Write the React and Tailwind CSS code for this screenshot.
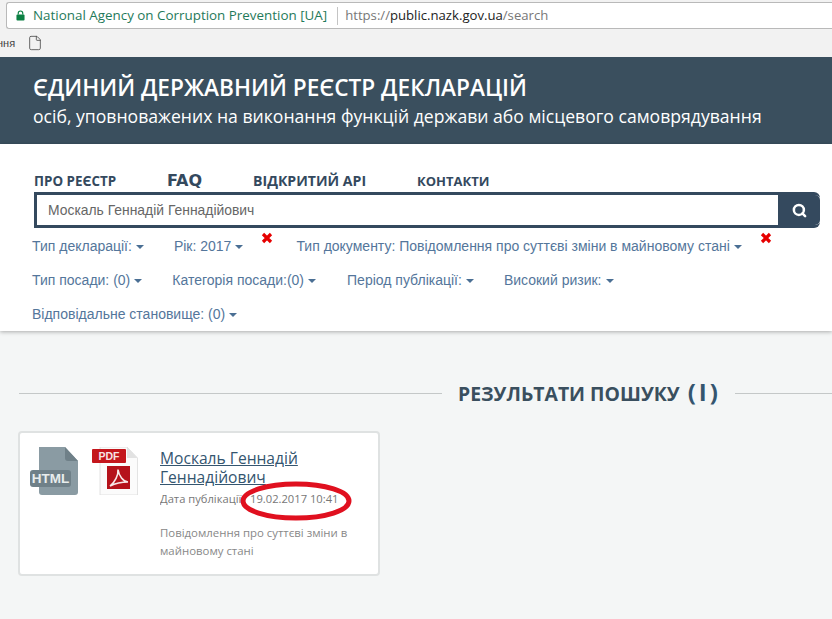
import React from 'react';
import { Search, File } from 'lucide-react';

const Caret = () => (
  <span className="ml-[4px] inline-block h-0 w-0 border-x-4 border-t-4 border-x-transparent border-t-[#4a6f94] align-middle" />
);

const Filter = ({ children, className = '' }) => (
  <span className={`whitespace-nowrap text-[14px] leading-5 text-[#54769b] ${className}`}>
    {children}
    <Caret />
  </span>
);

const RemoveMark = ({ className = '' }) => (
  <svg viewBox="0 0 12 12" className={`h-3 w-3 ${className}`}>
    <path d="M2 2 L10 10 M10 2 L2 10" stroke="#e60000" strokeWidth="3.200" />
  </svg>
);

const HtmlIcon = () => (
  <svg viewBox="0 0 50 50" className="h-[50px] w-[50px]">
    <path d="M9 0 H35 L48 14 V45 a3 3 0 0 1 -3 3 H12 a3 3 0 0 1 -3 -3 Z" fill="#8a9ba3" />
    <path d="M35 0 L48 14 H38 a3 3 0 0 1 -3 -3 Z" fill="#6f8088" />
    <rect x="0" y="23" width="41" height="17" rx="3" fill="#6f8088" />
    <text x="20.500" y="36" textAnchor="middle" fontSize="13.500" fontWeight="700" fill="#e8eded" fontFamily="Liberation Sans">HTML</text>
  </svg>
);

const PdfIcon = () => (
  <svg viewBox="0 0 46 48" className="h-12 w-[46px]">
    <path d="M8 0 H35 L45.500 11 V48 H8 Z" fill="#fbfbfb" stroke="#dcdcdc" strokeWidth="0.800" />
    <path d="M35 0 L45.500 11 H35 Z" fill="#e2e2e2" />
    <rect x="0" y="2" width="34" height="14" rx="1" fill="#c4161c" />
    <text x="17" y="13" textAnchor="middle" fontSize="10.500" fontWeight="700" fill="#f6e3e3" fontFamily="Liberation Sans">PDF</text>
    <rect x="15" y="19" width="23" height="23" fill="#b5121b" />
    <path d="M18 39 C23 35 26.500 28 26 22.500 C27 29 31 34.500 36 35 C30 35 24 36 18 39 Z" fill="none" stroke="#f8e8e8" strokeWidth="1.600" />
  </svg>
);

export default function App() {
  return (
    <div className="flex h-[619px] w-[832px] flex-col overflow-hidden bg-[#f4f6f6] font-['Liberation_Sans',sans-serif]">
      <div className="flex h-[57px] flex-col bg-[#f2f2f2]">
        <div className="ml-[6px] mt-[2px] flex h-[27px] items-center rounded-l-[3px] border border-r-0 border-[#b9b9b9] bg-white pl-[9px]">
          <svg viewBox="0 0 10 12" className="h-[11px] w-[9px]">
            <path d="M2.500 5 V3.500 a2.500 2.500 0 0 1 5 0 V5" fill="none" stroke="#0b8043" strokeWidth="1.300" />
            <rect x="0.500" y="5" width="9" height="6.500" rx="1" fill="#0b8043" />
          </svg>
          <span className="ml-[8px] whitespace-nowrap font-['Open_Sans',sans-serif] text-[13.400px] text-[#1f7a5a]">National Agency on Corruption Prevention [UA]</span>
          <span className="ml-[10px] h-[18px] w-px bg-[#c4c4c4]" />
          <span className="ml-[7px] whitespace-nowrap font-['Open_Sans',sans-serif] text-[13.150px] text-[#777]">
            https://<span className="text-[#222]">public.nazk.gov.ua</span>/search
          </span>
        </div>
        <div className="flex h-[28px] items-center">
          <span className="ml-[-3px] text-[11px] text-[#444]">ння</span>
          <File size={16} strokeWidth={1.200} className="ml-[12px] text-[#444]" />
        </div>
      </div>

      <header className="flex h-[87px] flex-col bg-[#3a4f5e] pl-[33px] pt-[15px] font-['Open_Sans',sans-serif] text-white">
        <h1 className="whitespace-nowrap text-[22.650px] font-semibold leading-[32px]">ЄДИНИЙ ДЕРЖАВНИЙ РЕЄСТР ДЕКЛАРАЦІЙ</h1>
        <p className="whitespace-nowrap text-[17.600px] leading-[24px]">осіб, уповноважених на виконання функцій держави або місцевого самоврядування</p>
      </header>

      <section className="h-[187px] bg-white shadow-[0_1px_4px_rgba(0,0,0,0.3)]">
        <nav className="flex h-[48px] items-end pb-[1px] pl-[34px] font-['Open_Sans',sans-serif] font-bold text-[#34495e]">
          <a className="w-[133px] text-[13.400px] leading-5">ПРО РЕЄСТР</a>
          <a className="w-[86px] font-['DejaVu_Sans',sans-serif] text-[16px] leading-5">FAQ</a>
          <a className="w-[164px] text-[14.100px] leading-5">ВІДКРИТИЙ API</a>
          <a className="text-[13px] leading-5">КОНТАКТИ</a>
        </nav>
        <div className="ml-[34px] flex h-[36px] w-[786px] rounded-r-[6px] border-[3px] border-r-0 border-[#34495e]">
          <div className="flex flex-1 items-center pl-[11px] pt-[1px] text-[13.900px] text-[#666]">Москаль Геннадій Геннадійович</div>
          <div className="flex w-[42px] items-center justify-center rounded-r-[5px] bg-[#34495e]">
            <Search size={15} strokeWidth={4} className="text-white" />
          </div>
        </div>
        <div className="mt-[8px] flex h-5 pl-[32px]">
          <Filter>Тип декларації:</Filter>
          <Filter className="ml-[30px]">Рік: 2017</Filter>
          <RemoveMark className="ml-[18px] -mt-[4px]" />
          <Filter className="ml-[23px]">Тип документу: Повідомлення про суттєві зміни в майновому стані</Filter>
          <RemoveMark className="ml-[18px] -mt-[4px]" />
        </div>
        <div className="mt-[14px] flex h-5 pl-[32px]">
          <Filter>Тип посади: (0)</Filter>
          <Filter className="ml-[30px]">Категорія посади:(0)</Filter>
          <Filter className="ml-[31px]">Період публікації:</Filter>
          <Filter className="ml-[30px]">Високий ризик:</Filter>
        </div>
        <div className="mt-[14px] flex h-5 pl-[32px]">
          <Filter>Відповідальне становище: (0)</Filter>
        </div>
      </section>

      <div className="mt-[47px] flex h-[30px] items-center pl-[19px]">
        <span className="h-px w-[423px] bg-[#c4c8c8]" />
        <h2 className="ml-[16px] mr-[15px] w-[262px] whitespace-nowrap font-['Open_Sans',sans-serif] text-[19.400px] font-bold leading-[30px] text-[#3a4f5e]">
          РЕЗУЛЬТАТИ ПОШУКУ <span className="ml-[3px] text-[24px] font-bold tracking-[3px] text-[#34556f]">(І)</span>
        </h2>
        <span className="h-px flex-1 bg-[#c4c8c8]" />
      </div>

      <article className="relative ml-[18px] mt-[23px] flex h-[145px] w-[362px] rounded-[4px] border-2 border-[#dfe2e2] bg-white font-['Open_Sans',sans-serif]">
        <div className="ml-[10px] mt-[14px] flex items-start">
          <HtmlIcon />
          <div className="ml-[12px]"><PdfIcon /></div>
        </div>
        <div className="ml-[22px] mt-[16px] w-[196px]">
          <a className="block text-[15.600px] leading-[19px] text-[#34556f] underline">Москаль Геннадій Геннадійович</a>
          <p className="mt-[4px] flex whitespace-nowrap text-[11.200px] leading-4 text-[#777]">
            <span className="w-[90px] overflow-hidden">Дата публікації:</span>
            <span>19.02.2017 10:41</span>
          </p>
          <p className="mt-[17px] w-[200px] text-[11.400px] leading-[18px] text-[#888]">Повідомлення про суттєві зміни в майновому стані</p>
        </div>
        <svg viewBox="0 0 112 42" className="absolute left-[220px] top-[47px] h-[42px] w-[112px]">
          <ellipse cx="56" cy="21" rx="53" ry="17" fill="none" stroke="#e0101f" strokeWidth="5" />
        </svg>
      </article>
    </div>
  );
}
